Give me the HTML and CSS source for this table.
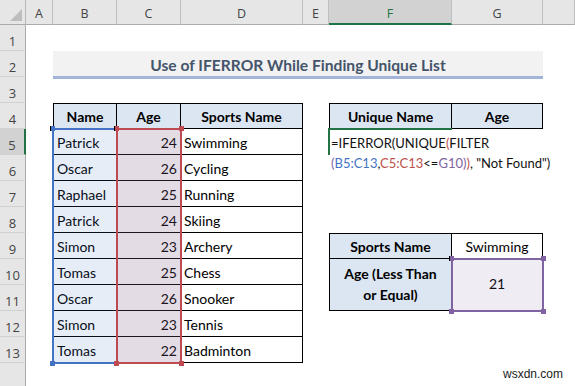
FILE: index.html
```html
<!DOCTYPE html>
<html lang="en">
<head>
    <meta charset="UTF-8" />
    <title>Use of IFERROR While Finding Unique List</title>
    <link rel="stylesheet" href="styles.css">
</head>
<body>

<div class="sheet">
    <!-- column headers -->
    <div class="corner"></div>
    <div class="col-hd">A</div>
    <div class="col-hd">B</div>
    <div class="col-hd">C</div>
    <div class="col-hd">D</div>
    <div class="col-hd">E</div>
    <div class="col-hd active">F</div>
    <div class="col-hd">G</div>
    <div class="col-hd"></div>

    <!-- row 1 -->
    <div class="row-hd">1</div>
    <div></div><div></div><div></div><div></div><div></div><div></div><div></div><div></div>

    <!-- row 2 -->
    <div class="row-hd">2</div>
    <div></div>
    <div class="title">Use of IFERROR While Finding Unique List</div>
    <div></div>

    <!-- row 3 -->
    <div class="row-hd">3</div>
    <div></div><div></div><div></div><div></div><div></div><div></div><div></div><div></div>

    <!-- row 4 -->
    <div class="row-hd">4</div>
    <div></div>
    <div class="cell t tt tl th">Name</div>
    <div class="cell t tt th">Age</div>
    <div class="cell t tt th">Sports Name</div>
    <div></div>
    <div class="cell t tt tl th">Unique Name</div>
    <div class="cell t tt th">Age</div>
    <div></div>

    <!-- row 5 -->
    <div class="row-hd active">5</div>
    <div></div>
    <div class="cell t tl">Patrick</div>
    <div class="cell t num">24</div>
    <div class="cell t">Swimming</div>
    <div></div><div></div><div></div><div></div>

    <!-- row 6 -->
    <div class="row-hd">6</div>
    <div></div>
    <div class="cell t tl">Oscar</div>
    <div class="cell t num">26</div>
    <div class="cell t">Cycling</div>
    <div></div><div></div><div></div><div></div>

    <!-- row 7 -->
    <div class="row-hd">7</div>
    <div></div>
    <div class="cell t tl">Raphael</div>
    <div class="cell t num">25</div>
    <div class="cell t">Running</div>
    <div></div><div></div><div></div><div></div>

    <!-- row 8 -->
    <div class="row-hd">8</div>
    <div></div>
    <div class="cell t tl">Patrick</div>
    <div class="cell t num">24</div>
    <div class="cell t">Skiing</div>
    <div></div><div></div><div></div><div></div>

    <!-- row 9 -->
    <div class="row-hd">9</div>
    <div></div>
    <div class="cell t tl">Simon</div>
    <div class="cell t num">23</div>
    <div class="cell t">Archery</div>
    <div></div>
    <div class="cell t tt tl th">Sports Name</div>
    <div class="cell t tt center">Swimming</div>
    <div></div>

    <!-- row 10 -->
    <div class="row-hd">10</div>
    <div></div>
    <div class="cell t tl">Tomas</div>
    <div class="cell t num">25</div>
    <div class="cell t">Chess</div>
    <div></div>
    <div class="cell t tl th merged">Age (Less Than<br>or Equal)</div>
    <div class="cell t center merged">21</div>
    <div></div>

    <!-- row 11 -->
    <div class="row-hd">11</div>
    <div></div>
    <div class="cell t tl">Oscar</div>
    <div class="cell t num">26</div>
    <div class="cell t">Snooker</div>
    <div></div>
    <div></div>

    <!-- row 12 -->
    <div class="row-hd">12</div>
    <div></div>
    <div class="cell t tl">Simon</div>
    <div class="cell t num">23</div>
    <div class="cell t">Tennis</div>
    <div></div><div></div><div></div><div></div>

    <!-- row 13 -->
    <div class="row-hd">13</div>
    <div></div>
    <div class="cell t tl">Tomas</div>
    <div class="cell t num">22</div>
    <div class="cell t">Badminton</div>
    <div></div><div></div><div></div><div></div>

    <!-- row 14 -->
    <div class="row-hd"></div>
    <div></div><div></div><div></div><div></div><div></div><div></div><div></div><div></div>

    <!-- range highlights while editing the formula -->
    <div class="sel sel-blue"><i class="tl"></i><i class="bl"></i></div>
    <div class="sel sel-red"><i class="tl"></i><i class="tr"></i><i class="bl"></i><i class="br"></i></div>
    <div class="sel sel-purple"><i class="tl"></i><i class="tr"></i><i class="bl"></i><i class="br"></i></div>

    <div class="edit"></div>
    <div class="formula">
        =IFERROR(UNIQUE<span class="f-red">(</span>FILTER<br><span class="f-purple">(</span><span class="f-blue">B5:C13</span>,<span class="f-red">C5:C13</span>&lt;=<span class="f-purple">G10)</span><span class="f-red">)</span>, "Not Found")
    </div>

    <div class="watermark">wsxdn.com</div>
</div>

</body>
</html>
```

FILE: styles.css
```css
* {
    box-sizing: border-box;
}

body, html {
    margin: 0;
    padding: 0;
    background: #fff;
    overflow: hidden;
}

.sheet {
    position: relative;
    display: grid;
    grid-template-columns: 26px 27px 64px 64px 122px 26px 123px 91px 32px;
    grid-template-rows: 25px repeat(14, 26px);
    width: 575px;
    height: 386px;
    overflow: hidden;
    font-family: 'Lato', 'Liberation Sans', sans-serif;
    font-size: 14px;
    color: #000;
}

/* headers */
.corner {
    position: relative;
    background: #e6e6e6;
    border-right: 1px solid #b9b9b9;
    border-bottom: 1px solid #ababab;
}

.corner::after {
    content: "";
    position: absolute;
    right: 3px;
    bottom: 3px;
    border-style: solid;
    border-width: 0 0 12px 12px;
    border-color: transparent transparent #bdbdbd transparent;
}

.col-hd {
    background: #e6e6e6;
    border-right: 1px solid #bfbfbf;
    border-bottom: 1px solid #ababab;
    font-family: 'Open Sans', sans-serif;
    font-size: 12.5px;
    color: #444;
    text-align: center;
    padding-top: 6px;
    line-height: 16px;
}

.col-hd.active {
    background: #d2d2d2;
    color: #217346;
    border-bottom: 2px solid #217346;
}

.row-hd {
    background: #e6e6e6;
    border-right: 1px solid #ababab;
    border-bottom: 1px solid #d0d0d0;
    font-family: 'Open Sans', sans-serif;
    font-size: 13px;
    color: #444;
    text-align: center;
    padding-top: 7px;
    line-height: 18px;
}

.row-hd.active {
    background: #d2d2d2;
    border-right: 2px solid #217346;
}

/* title */
.title {
    grid-column: span 6;
    margin-bottom: -2px;
    background: #f2f2f2;
    border-bottom: 3px solid #a2b4da;
    color: #44546a;
    font-weight: 700;
    font-size: 15.6px;
    text-align: center;
    padding-top: 4px;
    line-height: 20px;
}

/* cells */
.cell {
    display: flex;
    align-items: flex-end;
    padding: 0 3px 2px;
    line-height: 18px;
    white-space: nowrap;
}

.cell.num {
    justify-content: flex-end;
}

.cell.center,
.cell.th {
    justify-content: center;
}

.cell.th {
    background: #dce6f2;
    font-weight: 700;
}

.cell.merged {
    grid-row: span 2;
    align-items: center;
    text-align: center;
    line-height: 21px;
}

.t {
    border-right: 1px solid #000;
    border-bottom: 1px solid #000;
}

.tt {
    border-top: 1px solid #000;
}

.tl {
    border-left: 1px solid #000;
}

/* reference highlights */
.sel {
    position: absolute;
    top: -1px;
    left: -1px;
    right: -1px;
    bottom: -1px;
    border: 2px solid;
}

.sel i {
    position: absolute;
    width: 5px;
    height: 5px;
    background: currentColor;
}

.sel i.tl { top: -4px; left: -4px; }
.sel i.tr { top: -4px; right: -4px; }
.sel i.bl { bottom: -4px; left: -4px; }
.sel i.br { bottom: -4px; right: -4px; }

.sel-blue {
    grid-column: 3 / 5;
    grid-row: 6 / 15;
    color: #4472c4;
    background: rgba(68, 114, 196, 0.13);
}

.sel-red {
    grid-column: 4 / 5;
    grid-row: 6 / 15;
    color: #be4b52;
    background: rgba(192, 80, 77, 0.1);
}

.sel-purple {
    grid-column: 8 / 9;
    grid-row: 11 / 13;
    color: #8064a2;
    background: rgba(128, 100, 162, 0.12);
}

/* cell being edited */
.edit {
    position: absolute;
    grid-column: 7 / 8;
    grid-row: 6 / 7;
    top: -1px;
    left: -1px;
    right: 0;
    bottom: 0;
    border-top: 2px solid #217346;
    border-left: 2px solid #217346;
}

.formula {
    position: absolute;
    grid-column: 7 / 10;
    grid-row: 6 / 8;
    top: 5px;
    left: 2px;
    font-size: 13px;
    line-height: 19.5px;
    white-space: nowrap;
    color: #111;
}

.f-blue { color: #4472c4; }
.f-red { color: #c0504d; }
.f-purple { color: #8064a2; }

.watermark {
    position: absolute;
    right: 12px;
    bottom: 5px;
    font-family: 'Liberation Sans', sans-serif;
    font-size: 12px;
    color: #222;
}
```
